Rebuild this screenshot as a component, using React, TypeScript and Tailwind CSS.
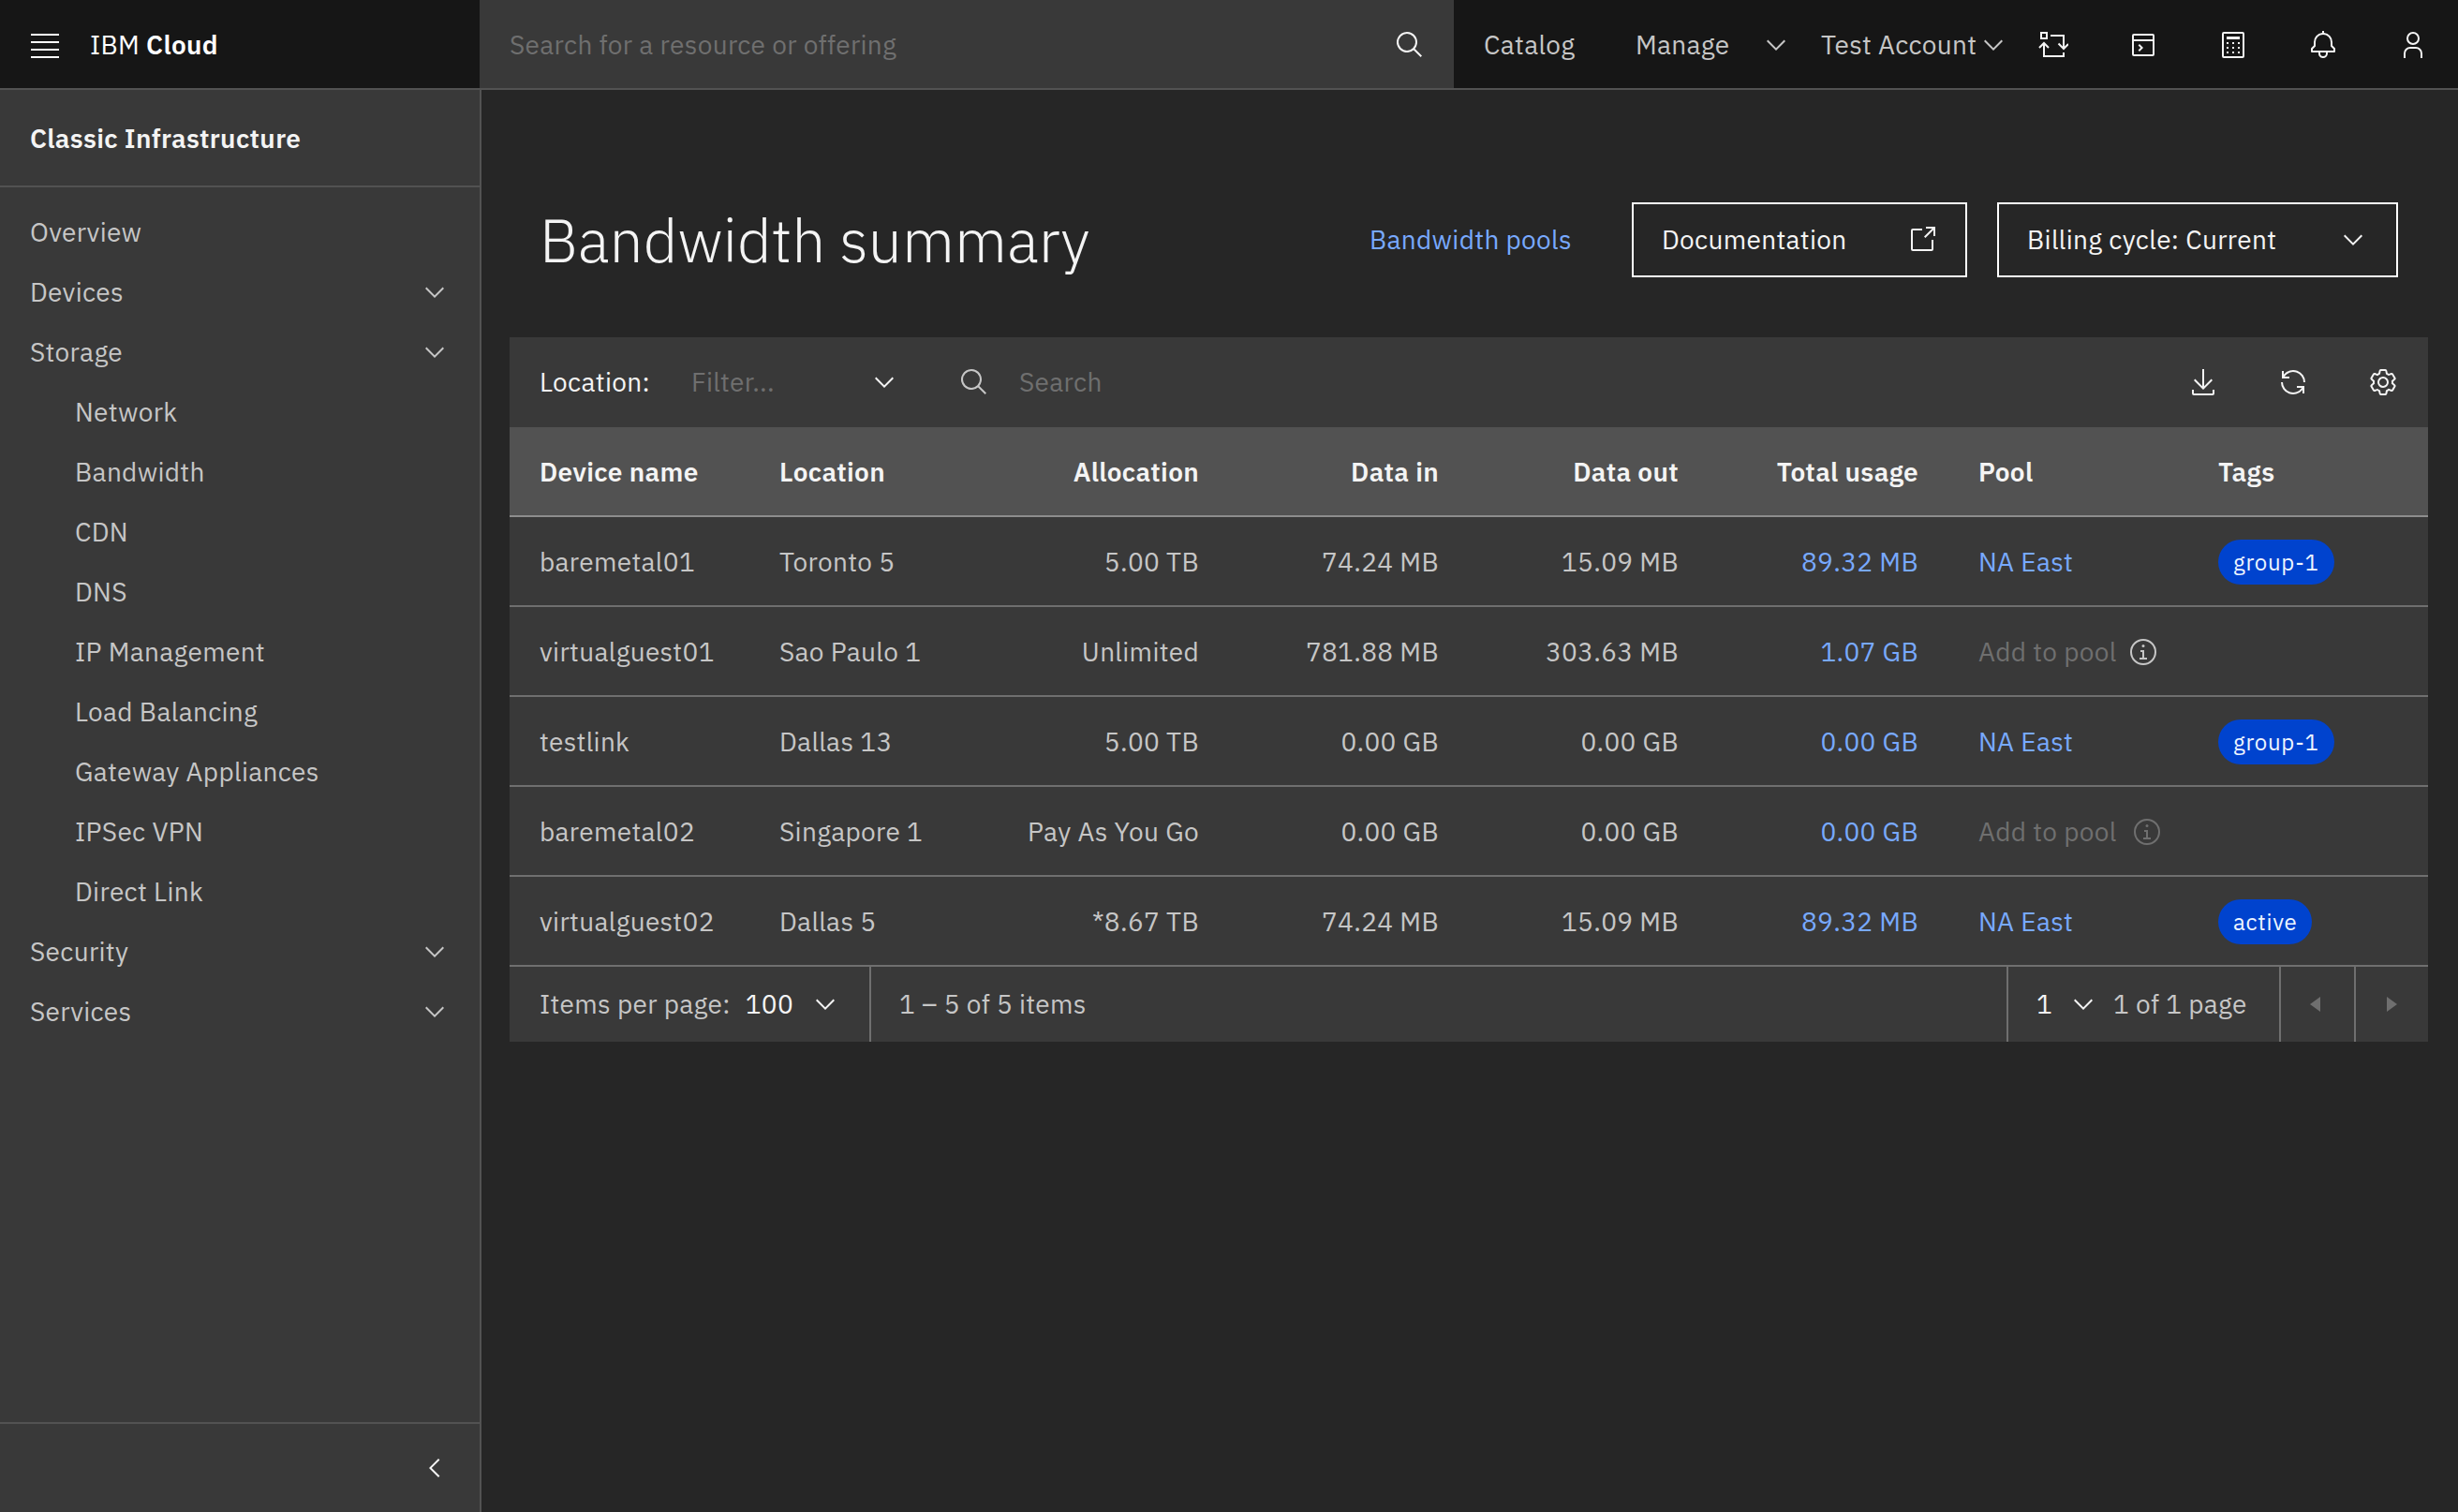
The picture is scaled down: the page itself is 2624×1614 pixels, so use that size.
const FONT = "font-['IBM_Plex_Sans','Roboto','Noto_Sans',sans-serif]";

type IconProps = { className?: string };

function ChevronDown({ className = "w-8 h-8" }: IconProps) {
  return (
    <svg viewBox="0 0 32 32" fill="currentColor" className={className}>
      <path d="M16 22L6 12 7.4 10.6 16 19.2 24.6 10.6 26 12z" />
    </svg>
  );
}

function SearchIcon({ className = "w-8 h-8" }: IconProps) {
  return (
    <svg viewBox="0 0 32 32" fill="currentColor" className={className}>
      <path d="M29,27.5859l-7.5521-7.5521a11.0177,11.0177,0,1,0-1.4141,1.4141L27.5859,29ZM4,13a9,9,0,1,1,9,9A9.01,9.01,0,0,1,4,13Z" />
    </svg>
  );
}

function LaunchIcon() {
  return (
    <svg viewBox="0 0 32 32" fill="currentColor" className="w-8 h-8">
      <path d="M26,28H6a2.0027,2.0027,0,0,1-2-2V6A2.0027,2.0027,0,0,1,6,4H16V6H6V26H26V16h2V26A2.0027,2.0027,0,0,1,26,28Z" />
      <polygon points="20 2 20 4 26.586 4 18 12.586 19.414 14 28 5.414 28 12 30 12 30 2 20 2" />
    </svg>
  );
}

function DownloadIcon() {
  return (
    <svg viewBox="0 0 32 32" fill="currentColor" className="w-8 h-8">
      <path d="M26,24v4H6V24H4v4H4a2,2,0,0,0,2,2H26a2,2,0,0,0,2-2h0V24Z" />
      <polygon points="26 14 24.59 12.59 17 20.17 17 2 15 2 15 20.17 7.41 12.59 6 14 16 24 26 14" />
    </svg>
  );
}

function RenewIcon() {
  return (
    <svg viewBox="0 0 32 32" fill="currentColor" className="w-8 h-8">
      <path d="M12,10H6.78A11,11,0,0,1,27,16h2A13,13,0,0,0,6,7.68V4H4v8h8ZM20,22h5.22A11,11,0,0,1,5,16H3a13,13,0,0,0,23,8.32V28h2V20H20Z" />
    </svg>
  );
}

function SettingsIcon() {
  return (
    <svg viewBox="0 0 32 32" fill="currentColor" className="w-8 h-8">
      <path d="M27,16.76c0-.25,0-.5,0-.76s0-.51,0-.77l1.92-1.68A2,2,0,0,0,29.3,11L26.94,7a2,2,0,0,0-1.73-1,2,2,0,0,0-.64.1l-2.43.82a11.35,11.35,0,0,0-1.31-.75l-.51-2.52a2,2,0,0,0-2-1.61H13.64a2,2,0,0,0-2,1.61l-.51,2.52a11.48,11.48,0,0,0-1.32.75L7.43,6.06A2,2,0,0,0,6.79,6,2,2,0,0,0,5.06,7L2.7,11a2,2,0,0,0,.41,2.51L5,15.24c0,.25,0,.5,0,.76s0,.51,0,.77L3.11,18.45A2,2,0,0,0,2.7,21L5.06,25a2,2,0,0,0,1.73,1,2,2,0,0,0,.64-.1l2.43-.82a11.35,11.35,0,0,0,1.31.75l.51,2.52a2,2,0,0,0,2,1.61h4.72a2,2,0,0,0,2-1.61l.51-2.52a11.48,11.48,0,0,0,1.32-.75l2.42.82a2,2,0,0,0,.64.1,2,2,0,0,0,1.73-1L29.3,21a2,2,0,0,0-.41-2.51ZM25.21,24l-3.43-1.16a8.86,8.86,0,0,1-2.71,1.57L18.36,28H13.64l-.71-3.55a9.36,9.36,0,0,1-2.7-1.57L6.79,24,4.43,20l2.72-2.4a8.9,8.9,0,0,1,0-3.13L4.43,12,6.79,8l3.43,1.16a8.86,8.86,0,0,1,2.71-1.57L13.64,4h4.72l.71,3.55a9.36,9.36,0,0,1,2.7,1.57L25.21,8,27.57,12l-2.72,2.4a8.9,8.9,0,0,1,0,3.13L27.57,20Z" />
      <path d="M16,22a6,6,0,1,1,6-6A5.94,5.94,0,0,1,16,22Zm0-10a3.91,3.91,0,0,0-4,4,3.91,3.91,0,0,0,4,4,3.91,3.91,0,0,0,4-4A3.91,3.91,0,0,0,16,12Z" />
    </svg>
  );
}

function InfoIcon({ className = "" }: IconProps) {
  return (
    <svg viewBox="0 0 32 32" fill="currentColor" className={`w-8 h-8 shrink-0 ${className}`}>
      <polygon points="17 22 17 14 13 14 13 16 15 16 15 22 12 22 12 24 20 24 20 22 17 22" />
      <path d="M16,8a1.5,1.5,0,1,0,1.5,1.5A1.5,1.5,0,0,0,16,8Z" />
      <path d="M16,30A14,14,0,1,1,30,16,14,14,0,0,1,16,30ZM16,4A12,12,0,1,0,28,16,12,12,0,0,0,16,4Z" />
    </svg>
  );
}

function SwitcherIcon() {
  return (
    <svg viewBox="0 0 32 32" fill="none" stroke="currentColor" strokeWidth="2" className="w-8 h-8">
      <rect x="3" y="3" width="6" height="6" />
      <path d="M13 6h14v14M21.5 14.5L27 20l5-5M27 24v4H6V14M1 19l5-5 5 5" />
    </svg>
  );
}

function ConsoleIcon() {
  return (
    <svg viewBox="0 0 32 32" fill="currentColor" className="w-8 h-8">
      <path d="M26 4H6a2 2 0 0 0-2 2v20a2 2 0 0 0 2 2h20a2 2 0 0 0 2-2V6a2 2 0 0 0-2-2zm0 2v4H6V6zM6 26V12h20v14z" />
      <path d="M12 15l-1.4 1.4 2.6 2.6-2.6 2.6L12 23l4-4z" />
    </svg>
  );
}

function CalculatorIcon() {
  return (
    <svg viewBox="0 0 32 32" fill="currentColor" className="w-8 h-8">
      <path d="M26,4V28H6V4H26m0-2H6A2,2,0,0,0,4,4V28a2,2,0,0,0,2,2H26a2,2,0,0,0,2-2V4a2,2,0,0,0-2-2Z" />
      <path d="M9 23h2v2H9zM15 23h2v2h-2zM21 23h2v2h-2zM9 18h2v2H9zM15 18h2v2h-2zM21 18h2v2h-2zM9 13h2v2H9zM15 13h2v2h-2zM21 13h2v2h-2zM9 7h14v3H9z" />
    </svg>
  );
}

function BellIcon() {
  return (
    <svg viewBox="0 0 32 32" fill="currentColor" className="w-8 h-8">
      <path d="M28.7071,19.293,26,16.5859V13a10.0136,10.0136,0,0,0-9-9.9492V1H15V3.0508A10.0136,10.0136,0,0,0,6,13v3.5859L3.2929,19.293A1,1,0,0,0,3,20v3a1,1,0,0,0,1,1h7v.7768a5.152,5.152,0,0,0,4.5,5.1987A5.0057,5.0057,0,0,0,21,25V24h7a1,1,0,0,0,1-1V20A1,1,0,0,0,28.7071,19.293ZM19,25a3,3,0,0,1-6,0V24h6Zm8-3H5V20.4141L7.707,17.707A1,1,0,0,0,8,17V13a8,8,0,0,1,16,0v4a1,1,0,0,0,.293.707L27,20.4141Z" />
    </svg>
  );
}

function UserIcon() {
  return (
    <svg viewBox="0 0 32 32" fill="currentColor" className="w-8 h-8">
      <path d="M16,4a5,5,0,1,1-5,5,5,5,0,0,1,5-5m0-2a7,7,0,1,0,7,7A7,7,0,0,0,16,2Z" />
      <path d="M26,30H24V25a5,5,0,0,0-5-5H13a5,5,0,0,0-5,5v5H6V25a7,7,0,0,1,7-7h6a7,7,0,0,1,7,7Z" />
    </svg>
  );
}

const sideNav = [
  { label: "Overview" },
  { label: "Devices", more: true },
  { label: "Storage", more: true },
  { label: "Network", sub: true },
  { label: "Bandwidth", sub: true },
  { label: "CDN", sub: true },
  { label: "DNS", sub: true },
  { label: "IP Management", sub: true },
  { label: "Load Balancing", sub: true },
  { label: "Gateway Appliances", sub: true },
  { label: "IPSec VPN", sub: true },
  { label: "Direct Link", sub: true },
  { label: "Security", more: true },
  { label: "Services", more: true },
];

const rows = [
  { name: "baremetal01", loc: "Toronto 5", alloc: "5.00 TB", dIn: "74.24 MB", dOut: "15.09 MB", total: "89.32 MB", pool: "NA East", tag: "group-1" },
  { name: "virtualguest01", loc: "Sao Paulo 1", alloc: "Unlimited", dIn: "781.88 MB", dOut: "303.63 MB", total: "1.07 GB", addClass: "w-[145px]", infoClass: "text-[#c6c6c6]" },
  { name: "testlink", loc: "Dallas 13", alloc: "5.00 TB", dIn: "0.00 GB", dOut: "0.00 GB", total: "0.00 GB", pool: "NA East", tag: "group-1" },
  { name: "baremetal02", loc: "Singapore 1", alloc: "Pay As You Go", dIn: "0.00 GB", dOut: "0.00 GB", total: "0.00 GB", addClass: "w-[149px]", infoClass: "text-[#6f6f6f]" },
  { name: "virtualguest02", loc: "Dallas 5", alloc: "*8.67 TB", dIn: "74.24 MB", dOut: "15.09 MB", total: "89.32 MB", pool: "NA East", tag: "active" },
];

function Header() {
  return (
    <header className="flex h-24 bg-[#161616] border-b-2 border-[#525252]">
      <div className="flex items-center w-[512px] pt-0.5 text-white">
        <svg viewBox="0 0 32 32" fill="currentColor" className="w-8 h-8 ml-8">
          <path d="M1 4h30v2H1zM1 12h30v2H1zM1 20h30v2H1zM1 28h30v2H1z" />
        </svg>
        <span className="ml-8 text-[28px]">
          IBM <span className="font-semibold">Cloud</span>
        </span>
      </div>
      <div className="flex items-center justify-between w-[1040px] pt-0.5 pl-8 pr-[31px] bg-[#393939] text-[28px] text-[#6f6f6f]">
        <span>Search for a resource or offering</span>
        <SearchIcon className="w-8 h-8 text-[#f4f4f4]" />
      </div>
      <nav className="flex flex-1 items-center pt-0.5 text-[28px] text-[#c6c6c6]">
        <span className="pl-8 w-[162px]">Catalog</span>
        <span className="pl-8 w-[168px]">Manage</span>
        <ChevronDown className="w-8 h-8 -ml-[2px] shrink-0" />
        <span className="ml-8 w-[168px] shrink-0">Test Account</span>
        <ChevronDown className="w-8 h-8 shrink-0" />
      </nav>
      <div className="flex pt-0.5 text-[#f4f4f4]">
        {[SwitcherIcon, ConsoleIcon, CalculatorIcon, BellIcon, UserIcon].map((Icon, i) => (
          <div key={i} className="flex items-center justify-center w-24">
            <Icon />
          </div>
        ))}
      </div>
    </header>
  );
}

function Sidebar() {
  return (
    <aside className="flex flex-col w-[514px] shrink-0 bg-[#393939] border-r-2 border-[#525252]">
      <div className="flex items-center h-[104px] pt-0.5 px-8 border-b-2 border-[#525252] text-[28px] font-semibold text-[#f4f4f4]">
        Classic Infrastructure
      </div>
      <div className="flex-1 py-4">
        {sideNav.map((item) => (
          <div
            key={item.label}
            className={`flex items-center justify-between h-16 text-[28px] text-[#c6c6c6] pr-8 ${item.sub ? "pl-20" : "pl-8"}`}
          >
            <span>{item.label}</span>
            {item.more && <ChevronDown className="w-8 h-8" />}
          </div>
        ))}
      </div>
      <div className="flex items-center justify-end h-24 pr-8 border-t-2 border-[#525252] text-[#f4f4f4]">
        <ChevronDown className="w-8 h-8 rotate-90" />
      </div>
    </aside>
  );
}

function Table() {
  return (
    <div className="mt-16 bg-[#393939]">
      <div className="flex items-center h-24 pl-8 text-[28px]">
        <span className="w-[162px] text-[#f4f4f4]">Location:</span>
        <span className="w-[190px] text-[#6f6f6f]">Filter...</span>
        <ChevronDown className="w-8 h-8 text-[#f4f4f4]" />
        <SearchIcon className="w-8 h-8 ml-16 text-[#c6c6c6]" />
        <span className="ml-8 flex-1 text-[#6f6f6f]">Search</span>
        <div className="flex text-[#f4f4f4]">
          {[DownloadIcon, RenewIcon, SettingsIcon].map((Icon, i) => (
            <div key={i} className="flex items-center justify-center w-24">
              <Icon />
            </div>
          ))}
        </div>
      </div>

      <div className="grid grid-cols-8 items-center h-24 pt-0.5 bg-[#525252] border-b-2 border-[#8d8d8d] text-[28px] font-semibold text-[#f4f4f4]">
        <div className="px-8">Device name</div>
        <div className="px-8">Location</div>
        <div className="px-8 text-right">Allocation</div>
        <div className="px-8 text-right">Data in</div>
        <div className="px-8 text-right">Data out</div>
        <div className="px-8 text-right">Total usage</div>
        <div className="px-8">Pool</div>
        <div className="px-8">Tags</div>
      </div>

      {rows.map((row) => (
        <div
          key={row.name}
          className="grid grid-cols-8 items-center h-24 pt-0.5 border-b-2 border-[#6f6f6f] text-[28px] text-[#c6c6c6]"
        >
          <div className="px-8 whitespace-nowrap">{row.name}</div>
          <div className="px-8 whitespace-nowrap">{row.loc}</div>
          <div className="px-8 text-right whitespace-nowrap">{row.alloc}</div>
          <div className="px-8 text-right whitespace-nowrap">{row.dIn}</div>
          <div className="px-8 text-right whitespace-nowrap">{row.dOut}</div>
          <div className="px-8 text-right whitespace-nowrap text-[#78a9ff]">{row.total}</div>
          {row.pool ? (
            <div className="px-8 text-[#78a9ff]">{row.pool}</div>
          ) : (
            <div className="flex items-center gap-[15px] pl-8 whitespace-nowrap text-[#6f6f6f]">
              <span className={`shrink-0 ${row.addClass}`}>Add to pool</span>
              <InfoIcon className={row.infoClass} />
            </div>
          )}
          <div className="flex px-8">
            {row.tag && (
              <span className="inline-flex items-center h-12 px-4 rounded-full bg-[#0043ce] text-2xl tracking-[0.72px] text-[#edf5ff]">
                {row.tag}
              </span>
            )}
          </div>
        </div>
      ))}

      <div className="flex items-stretch h-20 text-[28px] text-[#c6c6c6]">
        <div className="flex items-center w-[386px] pl-8 border-r-2 border-[#6f6f6f]">
          <span>Items per page:</span>
          <span className="ml-4 text-[#f4f4f4]">100</span>
          <ChevronDown className="w-8 h-8 ml-[18px] text-[#f4f4f4]" />
        </div>
        <div className="flex flex-1 items-center pl-[30px]">1 – 5 of 5 items</div>
        <div className="flex items-center w-[291px] pl-[30px] border-l-2 border-[#6f6f6f]">
          <span className="w-[34px] text-[#f4f4f4]">1</span>
          <ChevronDown className="w-8 h-8 text-[#f4f4f4]" />
          <span className="ml-4 whitespace-nowrap">1 of 1 page</span>
        </div>
        <div className="flex items-center justify-center w-20 border-l-2 border-[#6f6f6f] text-[#6f6f6f]">
          <svg viewBox="0 0 32 32" fill="currentColor" className="w-8 h-8">
            <path d="M19 24l-11-8 11-8z" />
          </svg>
        </div>
        <div className="flex items-center justify-center w-[79px] border-l-2 border-[#6f6f6f] text-[#6f6f6f]">
          <svg viewBox="0 0 32 32" fill="currentColor" className="w-8 h-8">
            <path d="M10 8l11 8-11 8z" />
          </svg>
        </div>
      </div>
    </div>
  );
}

export default function App() {
  return (
    <div className={`flex flex-col h-[1614px] bg-[#262626] overflow-hidden tracking-[0.32px] ${FONT}`}>
      <Header />
      <div className="flex flex-1 min-h-0">
        <Sidebar />
        <main className="flex-1 pl-[30px] pr-8 pt-[120px]">
          <div className="flex items-center justify-between h-20">
            <h1 className="pl-8 text-[64px] font-light tracking-normal text-[#f4f4f4]">Bandwidth summary</h1>
            <div className="flex items-center">
              <a className="mr-16 text-[28px] text-[#78a9ff]">Bandwidth pools</a>
              <div className="flex items-center justify-between w-[358px] h-20 px-[30px] border-2 border-white text-[28px] text-[#f4f4f4]">
                Documentation
                <LaunchIcon />
              </div>
              <div className="flex items-center justify-between w-[428px] h-20 ml-8 mr-8 px-[30px] border-2 border-white text-[28px] text-[#f4f4f4]">
                Billing cycle: Current
                <ChevronDown className="w-8 h-8" />
              </div>
            </div>
          </div>
          <Table />
        </main>
      </div>
    </div>
  );
}
